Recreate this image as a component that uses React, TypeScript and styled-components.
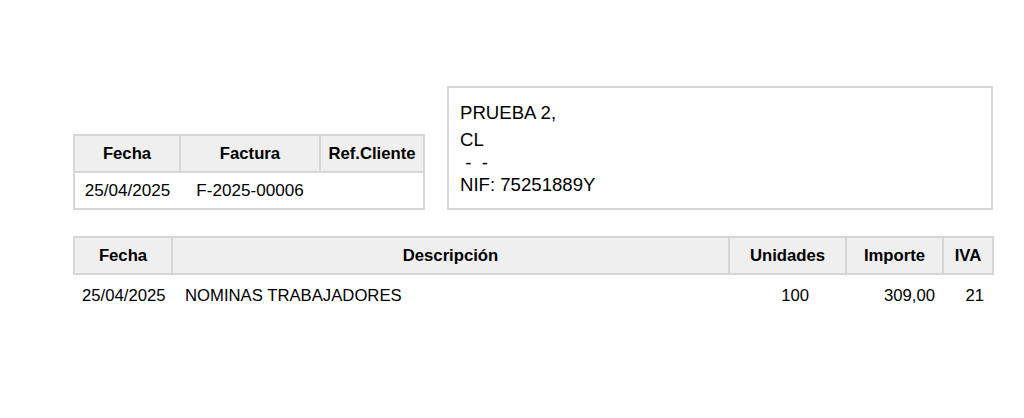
import React from 'react';
import styled, { createGlobalStyle } from 'styled-components';

const GlobalStyle = createGlobalStyle`
  html, body {
    margin: 0;
    padding: 0;
    background: #ffffff;
  }
  body {
    font-family: "Liberation Sans", Arial, sans-serif;
    color: #000;
  }
`;

const Page = styled.div`
  width: 921px;
  padding: 86px 0 0 73px;
  display: flex;
  flex-direction: column;
  gap: 26px;
`;

const TopSection = styled.div`
  display: flex;
  align-items: flex-end;
  gap: 22px;
`;

const Table = styled.table<{ $width: number }>`
  width: ${p => p.$width}px;
  border-collapse: collapse;
  table-layout: fixed;
  font-size: 16.7px;
`;

const HeadCell = styled.th`
  background: #efefef;
  border: 2px solid #d6d6d6;
  height: 35px;
  padding: 0 4px;
  font-weight: bold;
  text-align: center;
  vertical-align: middle;
  white-space: nowrap;
`;

const InfoCell = styled.td`
  border-top: 2px solid #d6d6d6;
  height: 35px;
  padding: 0 4px;
  font-size: 17.1px;
  text-align: center;
  vertical-align: middle;
  white-space: nowrap;
`;

const InfoRow = styled.tr`
  border-left: 2px solid #d6d6d6;
  border-right: 2px solid #d6d6d6;
  border-bottom: 2px solid #d6d6d6;
`;

const ClientBox = styled.div`
  width: 546px;
  height: 124px;
  box-sizing: border-box;
  border: 2px solid #d6d6d6;
  padding: 14px 11px 0;
  font-size: 18.6px;
  line-height: 22.8px;
`;

const ClientName = styled.div`
  margin-bottom: 4px;
`;

const ClientLine = styled.div`
  white-space: pre;
`;

const LineCell = styled.td<{ $align?: 'left' | 'right' | 'center'; $padLeft?: number; $padRight?: number }>`
  height: 42px;
  padding: 0 ${p => p.$padRight ?? 4}px 0 ${p => p.$padLeft ?? 4}px;
  text-align: ${p => p.$align ?? 'left'};
  vertical-align: middle;
  white-space: nowrap;
`;

interface InvoiceLine {
  fecha: string
  descripcion: string
  unidades: string
  importe: string
  iva: string
}

const lines: InvoiceLine[] = [
  { fecha: '25/04/2025', descripcion: 'NOMINAS TRABAJADORES', unidades: '100', importe: '309,00', iva: '21' },
];

const App: React.FC = () => {
  return (
    <>
      <GlobalStyle/>
      <Page>
        <TopSection>
          <Table $width={350}>
            <colgroup>
              <col style={{ width: 106 }}/>
              <col style={{ width: 140 }}/>
              <col style={{ width: 104 }}/>
            </colgroup>
            <thead>
              <tr>
                <HeadCell>Fecha</HeadCell>
                <HeadCell>Factura</HeadCell>
                <HeadCell>Ref.Cliente</HeadCell>
              </tr>
            </thead>
            <tbody>
              <InfoRow>
                <InfoCell>25/04/2025</InfoCell>
                <InfoCell>F-2025-00006</InfoCell>
                <InfoCell></InfoCell>
              </InfoRow>
            </tbody>
          </Table>
          <ClientBox>
            <ClientName>PRUEBA 2,</ClientName>
            <ClientLine>CL</ClientLine>
            <ClientLine> -  -</ClientLine>
            <ClientLine>NIF: 75251889Y</ClientLine>
          </ClientBox>
        </TopSection>
        <Table $width={919}>
          <colgroup>
            <col style={{ width: 98 }}/>
            <col style={{ width: 557 }}/>
            <col style={{ width: 117 }}/>
            <col style={{ width: 97 }}/>
            <col style={{ width: 50 }}/>
          </colgroup>
          <thead>
            <tr>
              <HeadCell>Fecha</HeadCell>
              <HeadCell>Descripción</HeadCell>
              <HeadCell>Unidades</HeadCell>
              <HeadCell>Importe</HeadCell>
              <HeadCell>IVA</HeadCell>
            </tr>
          </thead>
          <tbody>
            {lines.map((l, i) => (
              <tr key={i}>
                <LineCell $padLeft={8}>{l.fecha}</LineCell>
                <LineCell $padLeft={13}>{l.descripcion}</LineCell>
                <LineCell $align="right" $padRight={37}>{l.unidades}</LineCell>
                <LineCell $align="right" $padRight={8}>{l.importe}</LineCell>
                <LineCell $align="right" $padRight={9}>{l.iva}</LineCell>
              </tr>
            ))}
          </tbody>
        </Table>
      </Page>
    </>
  );
};

export default App;
